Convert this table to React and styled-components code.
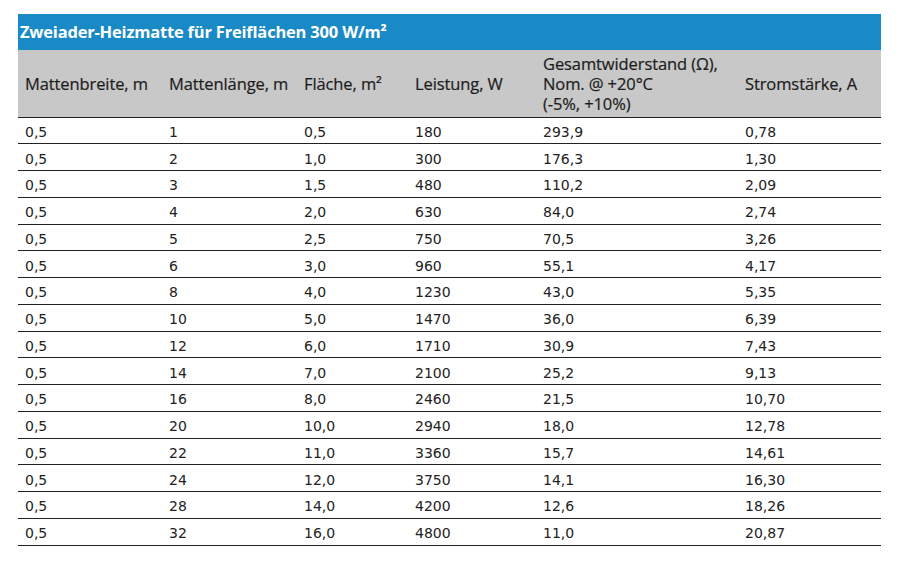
import React from "react";
import styled, { createGlobalStyle } from "styled-components";

const GlobalStyle = createGlobalStyle`
  body {
    margin: 0;
    background: #ffffff;
  }
`;

const Page = styled.div`
  padding: 14px 18px 0 18px;
  width: 863px;
`;

const Table = styled.table`
  width: 863px;
  border-collapse: collapse;
  table-layout: fixed;
  font-family: "DejaVu Sans", Verdana, sans-serif;
  color: #222;
`;

const Col = styled.col`
  width: ${(p) => p.$w}px;
`;

const TitleCell = styled.th`
  background: #1a8ac6;
  color: #ffffff;
  font-family: "Open Sans", "Noto Sans", sans-serif;
  font-weight: 700;
  font-size: 16.5px;
  line-height: 20px;
  text-align: left;
  height: 36px;
  padding: 0 0 0 2px;
  letter-spacing: -0.2px;
  box-sizing: border-box;
`;

const HeadRow = styled.tr`
  background: #c8c8c8;
  border-bottom: 1px solid #222;
`;

const HeadCell = styled.th`
  font-family: "Open Sans", "Noto Sans", sans-serif;
  font-weight: 400;
  font-size: 16.5px;
  line-height: 20px;
  color: #1c1c1c;
  text-align: left;
  vertical-align: middle;
  height: 67px;
  padding: 1px 0 0 7px;
  box-sizing: border-box;
  white-space: nowrap;
  letter-spacing: -0.1px;
  -webkit-text-stroke: 0.2px #1c1c1c;
`;

const Row = styled.tr`
  border-bottom: 1px solid #222;
`;

const Cell = styled.td`
  font-size: 14px;
  line-height: 18px;
  height: 26.75px;
  padding: 3px 0 0 7px;
  box-sizing: border-box;
  vertical-align: middle;
  white-space: nowrap;
`;

const columns = [
  { w: 144, label: "Mattenbreite, m" },
  { w: 135, label: "Mattenlänge, m" },
  { w: 111, label: "Fläche, m²" },
  { w: 128, label: "Leistung, W" },
  {
    w: 202,
    label: (
      <>
        Gesamtwiderstand (Ω),
        <br />
        Nom. @ +20°C
        <br />
        (-5%, +10%)
      </>
    ),
  },
  { w: 143, label: "Stromstärke, A" },
];

const rows = [
  ["0,5", "1", "0,5", "180", "293,9", "0,78"],
  ["0,5", "2", "1,0", "300", "176,3", "1,30"],
  ["0,5", "3", "1,5", "480", "110,2", "2,09"],
  ["0,5", "4", "2,0", "630", "84,0", "2,74"],
  ["0,5", "5", "2,5", "750", "70,5", "3,26"],
  ["0,5", "6", "3,0", "960", "55,1", "4,17"],
  ["0,5", "8", "4,0", "1230", "43,0", "5,35"],
  ["0,5", "10", "5,0", "1470", "36,0", "6,39"],
  ["0,5", "12", "6,0", "1710", "30,9", "7,43"],
  ["0,5", "14", "7,0", "2100", "25,2", "9,13"],
  ["0,5", "16", "8,0", "2460", "21,5", "10,70"],
  ["0,5", "20", "10,0", "2940", "18,0", "12,78"],
  ["0,5", "22", "11,0", "3360", "15,7", "14,61"],
  ["0,5", "24", "12,0", "3750", "14,1", "16,30"],
  ["0,5", "28", "14,0", "4200", "12,6", "18,26"],
  ["0,5", "32", "16,0", "4800", "11,0", "20,87"],
];

const App = () => {
  return (
    <Page>
      <GlobalStyle />
      <Table>
        <colgroup>
          {columns.map((c, i) => (
            <Col key={i} $w={c.w} />
          ))}
        </colgroup>
        <thead>
          <tr>
            <TitleCell colSpan={6}>
              Zweiader-Heizmatte für Freiflächen 300 W/m²
            </TitleCell>
          </tr>
          <HeadRow>
            {columns.map((c, i) => (
              <HeadCell key={i}>{c.label}</HeadCell>
            ))}
          </HeadRow>
        </thead>
        <tbody>
          {rows.map((r, i) => (
            <Row key={i}>
              {r.map((v, j) => (
                <Cell key={j}>{v}</Cell>
              ))}
            </Row>
          ))}
        </tbody>
      </Table>
    </Page>
  );
};

export default App;
